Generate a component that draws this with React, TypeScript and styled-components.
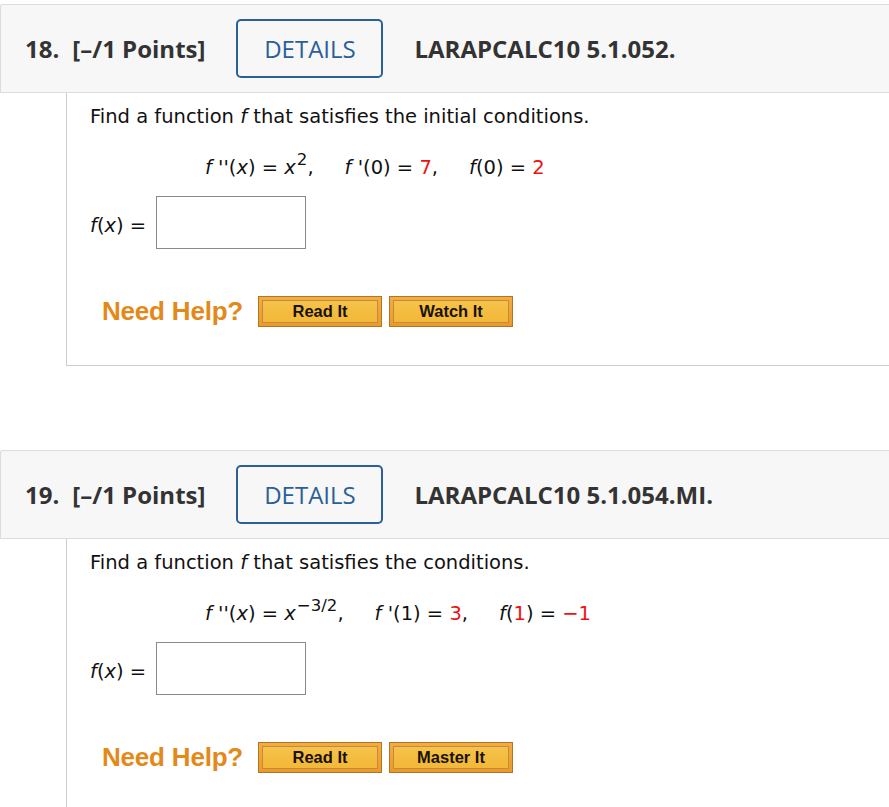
import React from 'react';
import styled, { createGlobalStyle } from 'styled-components';

const GlobalStyle = createGlobalStyle`
  html, body {
    margin: 0;
    padding: 0;
    background: #ffffff;
    overflow: hidden;
  }
`;

const Page = styled.div`
  padding-top: 4px;
  width: 889px;
`;

const Question = styled.section`
  & + & {
    margin-top: 84px;
  }
`;

const Header = styled.div`
  display: flex;
  align-items: center;
  height: 87px;
  background: #f7f7f7;
  border: 1px solid #dcdcdc;
  border-right: none;
  border-top-left-radius: 3px;
  padding-left: 24px;
  font-family: 'Open Sans', 'Liberation Sans', sans-serif;
  color: #333333;
`;

const Number = styled.span`
  font-size: 24px;
  font-weight: 700;
  margin-right: 13px;
`;

const Points = styled.span`
  font-size: 24px;
  font-weight: 700;
  margin-right: 31px;
`;

const DetailsButton = styled.button`
  box-sizing: border-box;
  width: 147px;
  height: 59px;
  border: 2.5px solid #2b5f98;
  border-radius: 5px;
  background: transparent;
  color: #2b5f98;
  font-family: 'Open Sans', 'Liberation Sans', sans-serif;
  font-size: 24px;
  font-weight: 400;
  padding: 0;
  margin-right: 31px;
  cursor: pointer;
`;

const Ref = styled.span`
  font-size: 24px;
  font-weight: 700;
`;

const Body = styled.div`
  margin-left: 66px;
  border-left: 1px solid #cccccc;
  border-bottom: 1px solid #cccccc;
  padding: 12px 0 0 23px;
  font-family: Verdana, 'DejaVu Sans', sans-serif;
  font-size: 19.5px;
  color: #111111;
`;

const Prompt = styled.p`
  margin: 0;
  line-height: 24px;
`;

const Equation = styled.div`
  display: flex;
  gap: 31px;
  margin: 27px 0 0 115px;
  line-height: 24px;
  white-space: pre;
`;

const Term = styled.span``;

const I = styled.i`
  font-style: italic;
`;

const Red = styled.span`
  color: #ee1111;
`;

const Sup = styled.sup`
  font-size: 0.85em;
  line-height: 0;
  position: relative;
  top: -0.1em;
  margin-left: 1px;
`;

const AnswerRow = styled.div`
  display: flex;
  align-items: center;
  margin-top: 16px;
`;

const AnswerLabel = styled.span`
  margin-right: 10px;
  padding-top: 6px;
`;

const AnswerInput = styled.input`
  box-sizing: border-box;
  width: 150px;
  height: 53px;
  border: 1px solid #8a8a8a;
  background: #ffffff;
  margin: 0;
  padding: 0 6px;
  font-size: 16px;
`;

const HelpRow = styled.div`
  display: flex;
  align-items: center;
  margin-top: 47px;
  padding-left: 12px;
  height: 31px;
  margin-bottom: 38px;
`;

const HelpLabel = styled.span`
  font-family: 'Liberation Sans', Arial, sans-serif;
  font-weight: 700;
  font-size: 26px;
  color: #e3891a;
  margin-right: 15px;
  letter-spacing: -0.2px;
`;

const HelpButton = styled.button`
  box-sizing: border-box;
  width: 124px;
  height: 31px;
  padding: 3px;
  border: 1px solid #b0742a;
  background: linear-gradient(#f3ad3e, #ec9a26);
  margin-right: 7px;
  cursor: pointer;
  display: flex;
`;

const HelpButtonFace = styled.span`
  flex: 1;
  display: flex;
  align-items: center;
  justify-content: center;
  border: 1px solid #c28a42;
  background: linear-gradient(#f6c24a, #f2b838);
  font-family: 'Liberation Sans', Arial, sans-serif;
  font-weight: 700;
  font-size: 16.5px;
  color: #1a1208;
`;

type Props = {
  num: number;
  refId: string;
  prompt: string;
  terms: React.ReactNode[];
  second: string;
};

const QuestionBlock: React.FC<Props> = ({ num, refId, prompt, terms, second }) => (
  <Question>
    <Header>
      <Number>{num}.</Number>
      <Points>[–/1 Points]</Points>
      <DetailsButton>DETAILS</DetailsButton>
      <Ref>{refId}</Ref>
    </Header>
    <Body>
      <Prompt>
        Find a function <I>f</I> that satisfies the {prompt}.
      </Prompt>
      <Equation>
        {terms.map((t, i) => (
          <Term key={i}>{t}</Term>
        ))}
      </Equation>
      <AnswerRow>
        <AnswerLabel>
          <I>f</I>(<I>x</I>) =
        </AnswerLabel>
        <AnswerInput type="text" />
      </AnswerRow>
      <HelpRow>
        <HelpLabel>Need Help?</HelpLabel>
        <HelpButton>
          <HelpButtonFace>Read It</HelpButtonFace>
        </HelpButton>
        <HelpButton>
          <HelpButtonFace>{second}</HelpButtonFace>
        </HelpButton>
      </HelpRow>
    </Body>
  </Question>
);

export default function App() {
  return (
    <Page>
      <GlobalStyle />
      <QuestionBlock
        num={18}
        refId="LARAPCALC10 5.1.052."
        prompt="initial conditions"
        second="Watch It"
        terms={[
          <>
            <I>f</I> ''(<I>x</I>) = <I>x</I>
            <Sup>2</Sup>,
          </>,
          <>
            <I>f</I> '(0) = <Red>7</Red>,
          </>,
          <>
            <I>f</I>(0) = <Red>2</Red>
          </>,
        ]}
      />
      <QuestionBlock
        num={19}
        refId="LARAPCALC10 5.1.054.MI."
        prompt="conditions"
        second="Master It"
        terms={[
          <>
            <I>f</I> ''(<I>x</I>) = <I>x</I>
            <Sup>−3/2</Sup>,
          </>,
          <>
            <I>f</I> '(1) = <Red>3</Red>,
          </>,
          <>
            <I>f</I>(<Red>1</Red>) = <Red>−1</Red>
          </>,
        ]}
      />
    </Page>
  );
}
